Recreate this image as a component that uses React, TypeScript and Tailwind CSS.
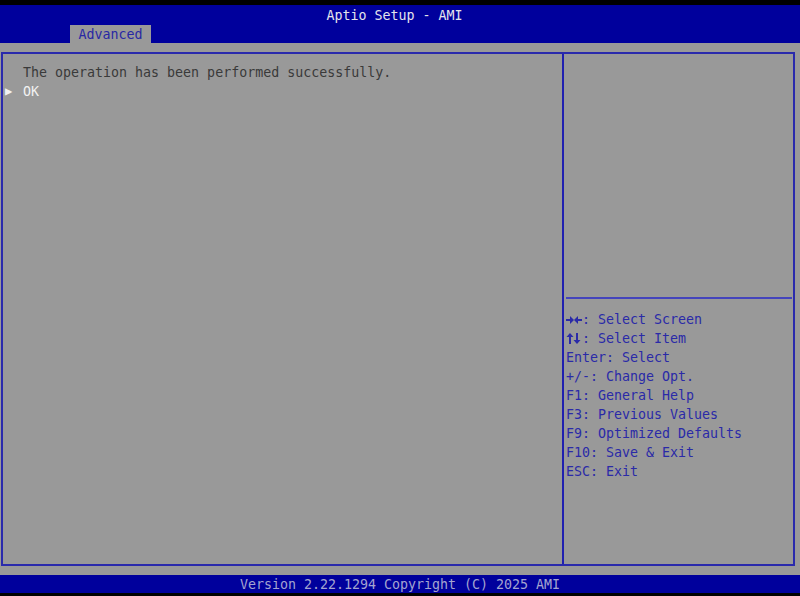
import React from "react";

const mono = { fontFamily: '"DejaVu Sans Mono", "Liberation Mono", monospace' };

function LrArrows() {
  return (
    <svg width="16" height="10" viewBox="0 0 16 10" className="shrink-0" aria-hidden>
      <g stroke="#2a2aa8" strokeWidth="2" fill="none">
        <line x1="0" y1="5" x2="7" y2="5" />
        <line x1="9" y1="5" x2="16" y2="5" />
      </g>
      <g fill="#2a2aa8">
        <polygon points="8,5 4,1 4,9" />
        <polygon points="8,5 12,1 12,9" />
      </g>
    </svg>
  );
}

function UdArrows() {
  return (
    <svg width="16" height="11" viewBox="0 0 16 11" className="shrink-0" aria-hidden>
      <g stroke="#2a2aa8" strokeWidth="2" fill="none">
        <line x1="4" y1="3" x2="4" y2="11" />
        <line x1="11" y1="0" x2="11" y2="8" />
      </g>
      <g fill="#2a2aa8">
        <polygon points="4,0 0.5,4 7.5,4" />
        <polygon points="11,11 7.5,7 14.5,7" />
      </g>
    </svg>
  );
}

export default function App() {
  const help: { k: string; t: string; icon?: React.ReactNode }[] = [
    { k: "", t: ": Select Screen", icon: <LrArrows /> },
    { k: "", t: ": Select Item", icon: <UdArrows /> },
    { k: "Enter", t: ": Select" },
    { k: "+/-", t: ": Change Opt." },
    { k: "F1", t: ": General Help" },
    { k: "F3", t: ": Previous Values" },
    { k: "F9", t: ": Optimized Defaults" },
    { k: "F10", t: ": Save & Exit" },
    { k: "ESC", t: ": Exit" },
  ];
  return (
    <div
      className="w-[800px] h-[596px] bg-[#999999] flex flex-col overflow-hidden text-[13.3px] leading-[19px]"
      style={mono}
    >
      <div className="h-[5px] bg-black" />
      <div className="h-[38px] bg-[#00009c] flex flex-col">
        <div className="h-[21px] flex items-center justify-center pr-[11px] text-[#e4e4ec]">
          Aptio Setup - AMI
        </div>
        <div className="h-[17px] flex items-end">
          <div className="ml-[70px] w-[81px] h-[18px] bg-[#999999] flex items-center justify-center text-[#2828a4]">
            Advanced
          </div>
        </div>
      </div>
      <div className="h-[9px]" />
      <div className="ml-[1px] w-[794px] h-[514px] border-2 border-[#2a2aac] flex">
        <div className="w-[559px] h-full pt-[9px] flex flex-col">
          <div className="pl-[20px] text-[#3a3a3a]">The operation has been performed successfully.</div>
          <div className="flex items-center text-[#f2f2f2]">
            <span className="w-[20px] pl-[2px] text-[12px] leading-[19px]">▶</span>
            <span>OK</span>
          </div>
        </div>
        <div className="w-[2px] h-full bg-[#2020b0]" />
        <div className="flex-1 h-full flex flex-col">
          <div className="h-[243px]" />
          <div className="ml-[2px] mr-[1px] h-[2px] bg-[#4444bc]" />
          <div className="pt-[11px] pl-[2px] flex flex-col text-[#2a2aa8]">
            {help.map((h, i) => (
              <div key={i} className="whitespace-pre flex items-center h-[19px]">
                {h.icon ? h.icon : <span>{h.k}</span>}
                <span>{h.t}</span>
              </div>
            ))}
          </div>
        </div>
      </div>
      <div className="h-[9px]" />
      <div className="h-[18px] bg-[#00009c] flex items-center justify-center text-[#a4a4d0]">
        Version 2.22.1294 Copyright (C) 2025 AMI
      </div>
      <div className="flex-1 bg-black" />
    </div>
  );
}
